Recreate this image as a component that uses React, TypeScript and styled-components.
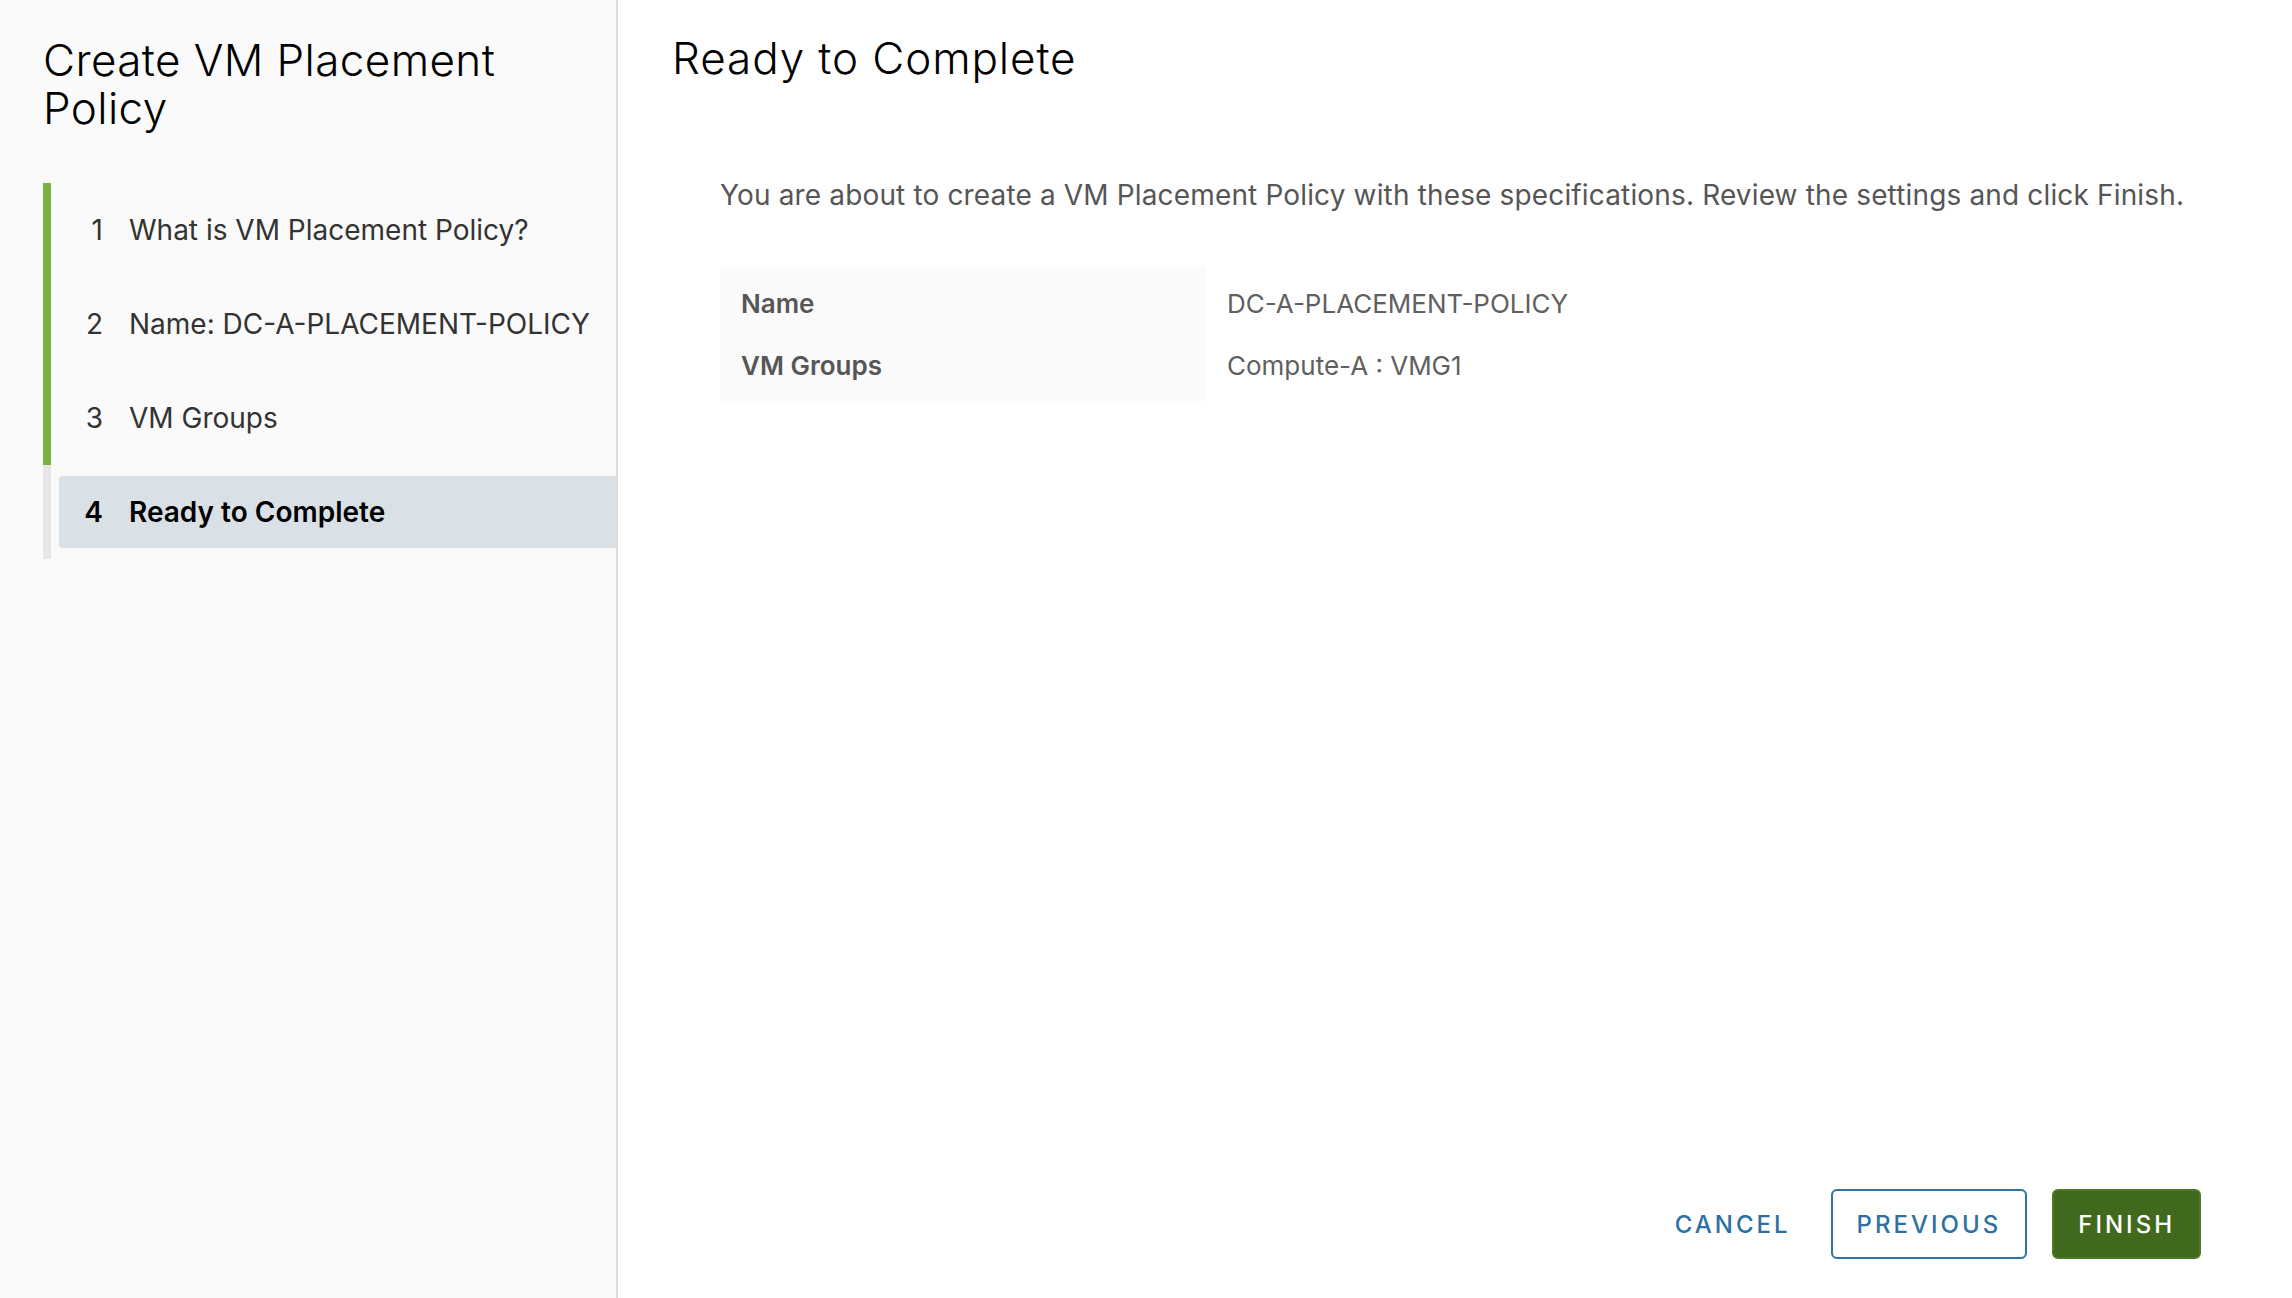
import React from "react";
import styled, { createGlobalStyle } from "styled-components";

const Global = createGlobalStyle`
  html, body { margin: 0; padding: 0; }
  body {
    font-family: Inter, "Open Sans", "Liberation Sans", sans-serif;
    background: #ffffff;
    color: #000;
  }
  * { box-sizing: border-box; }
`;

const Shell = styled.div`
  display: flex;
  width: 100vw;
  height: 100vh;
  overflow: hidden;
`;

const Sidebar = styled.aside`
  width: 618px;
  flex: 0 0 618px;
  background: #fafafa;
  border-right: 2px solid #dedede;
  padding: 36px 0 0 43px;
  display: flex;
  flex-direction: column;
`;

const WizardTitle = styled.h1`
  margin: 0;
  max-width: 500px;
  font-size: 44px;
  line-height: 48px;
  font-weight: 300;
  letter-spacing: 0.4px;
  color: #000;
`;

const StepList = styled.ol`
  list-style: none;
  margin: 51px 0 0 0;
  padding: 0;
`;

const StepSegment = styled.li<{ $done: boolean }>`
  border-left: 8px solid ${(p) => (p.$done ? "#77b53f" : "#e6e6e6")};
  padding: 11px 0 11px 8px;
`;

const StepItem = styled.div<{ $active: boolean }>`
  height: 72px;
  display: flex;
  align-items: center;
  border-radius: 4px 0 0 4px;
  background: ${(p) => (p.$active ? "#d9e1e7" : "transparent")};
  color: ${(p) => (p.$active ? "#000" : "#333")};
  font-weight: ${(p) => (p.$active ? 600 : 400)};
  font-size: 28px;
`;

const StepNum = styled.span`
  width: 44px;
  text-align: right;
  flex: 0 0 44px;
`;

const StepLabel = styled.span`
  margin-left: 26px;
  white-space: nowrap;
`;

const Main = styled.main`
  flex: 1;
  display: flex;
  flex-direction: column;
  padding: 34px 91px 39px 54px;
`;

const Heading = styled.h2`
  margin: 0;
  font-size: 44px;
  line-height: 48px;
  font-weight: 300;
  letter-spacing: 0.9px;
  color: #000;
`;

const Body = styled.section`
  margin: 0 0 0 48px;
`;

const Description = styled.p`
  margin: 95px 0 0 0;
  font-size: 28px;
  line-height: 36px;
  letter-spacing: 0.15px;
  color: #565656;
`;

const SummaryTable = styled.div`
  margin-top: 54px;
  display: grid;
  grid-template-columns: 486px 1fr;
`;

const LabelCell = styled.div<{ $first?: boolean; $last?: boolean }>`
  background: #fafafa;
  height: ${(p) => (p.$first || p.$last ? 67 : 62)}px;
  padding: ${(p) => (p.$first ? "5px" : "0")} 21px ${(p) => (p.$last ? "5px" : "0")};
  display: flex;
  align-items: center;
  font-size: 26px;
  font-weight: 600;
  color: #565656;
`;

const ValueCell = styled.div<{ $first?: boolean; $last?: boolean }>`
  height: ${(p) => (p.$first || p.$last ? 67 : 62)}px;
  padding: ${(p) => (p.$first ? "5px" : "0")} 21px ${(p) => (p.$last ? "5px" : "0")};
  display: flex;
  align-items: center;
  font-size: 26px;
  color: #606060;
`;

const Footer = styled.footer`
  margin-top: auto;
  display: flex;
  justify-content: flex-end;
  align-items: center;
  gap: 25px;
`;

const Button = styled.button<{ $variant: "flat" | "outline" | "solid" }>`
  height: 70px;
  padding: 0 ${(p) => (p.$variant === "flat" ? 13 : 24)}px;
  border-radius: 6px;
  font-family: inherit;
  font-size: 24px;
  font-weight: 500;
  letter-spacing: 3px;
  text-transform: uppercase;
  cursor: pointer;
  border: 2px solid
    ${(p) =>
      p.$variant === "outline"
        ? "#2f72a6"
        : p.$variant === "solid"
        ? "#4c7b23"
        : "transparent"};
  background: ${(p) => (p.$variant === "solid" ? "#41691e" : "transparent")};
  color: ${(p) => (p.$variant === "solid" ? "#ffffff" : "#2f70a3")};
`;

const steps = [
  { n: 1, label: "What is VM Placement Policy?" },
  { n: 2, label: "Name: DC-A-PLACEMENT-POLICY" },
  { n: 3, label: "VM Groups" },
  { n: 4, label: "Ready to Complete" },
];

const rows = [
  { label: "Name", value: "DC-A-PLACEMENT-POLICY" },
  { label: "VM Groups", value: "Compute-A : VMG1" },
];

export default function App() {
  const current = 4;
  return (
    <>
      <Global />
      <Shell>
        <Sidebar>
          <WizardTitle>Create VM Placement Policy</WizardTitle>
          <StepList>
            {steps.map((s) => (
              <StepSegment key={s.n} $done={s.n < current}>
                <StepItem $active={s.n === current}>
                  <StepNum>{s.n}</StepNum>
                  <StepLabel>{s.label}</StepLabel>
                </StepItem>
              </StepSegment>
            ))}
          </StepList>
        </Sidebar>
        <Main>
          <Heading>Ready to Complete</Heading>
          <Body>
            <Description>
              You are about to create a VM Placement Policy with these specifications. Review the
              settings and click Finish.
            </Description>
            <SummaryTable>
              {rows.map((r, i) => (
                <React.Fragment key={r.label}>
                  <LabelCell $first={i === 0} $last={i === rows.length - 1}>
                    {r.label}
                  </LabelCell>
                  <ValueCell $first={i === 0} $last={i === rows.length - 1}>
                    {r.value}
                  </ValueCell>
                </React.Fragment>
              ))}
            </SummaryTable>
          </Body>
          <Footer>
            <Button $variant="flat">Cancel</Button>
            <Button $variant="outline">Previous</Button>
            <Button $variant="solid">Finish</Button>
          </Footer>
        </Main>
      </Shell>
    </>
  );
}
